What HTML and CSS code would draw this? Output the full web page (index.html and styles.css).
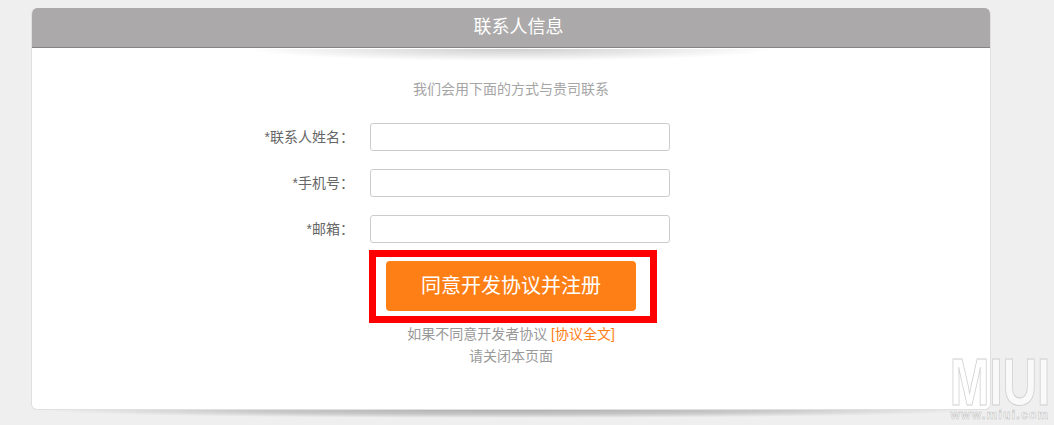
FILE: index.html
```html
<!DOCTYPE html>
<html lang="zh-CN">
<head>
  <meta charset="UTF-8">
  <title>联系人信息</title>
  <link rel="stylesheet" href="styles.css">
</head>
<body>

  <div class="panel">
    <h2 class="panel-title">联系人信息</h2>
    <div class="title-shadow"></div>
    <p class="panel-tip">我们会用下面的方式与贵司联系</p>

    <form class="contact-form">
      <div class="form-row">
        <label class="form-label">*联系人姓名：</label>
        <input class="form-input" type="text">
      </div>
      <div class="form-row">
        <label class="form-label">*手机号：</label>
        <input class="form-input" type="text">
      </div>
      <div class="form-row">
        <label class="form-label">*邮箱：</label>
        <input class="form-input" type="text">
      </div>
      <div class="submit-row">
        <div class="highlight-box">
          <button class="submit-btn" type="button">同意开发协议并注册</button>
        </div>
      </div>
    </form>

    <p class="agree-note">如果不同意开发者协议 <a href="#">[协议全文]</a><br>请关闭本页面</p>
  </div>
  <div class="panel-shadow"></div>

  <div class="watermark">
    <div class="watermark-logo">MIUI</div>
    <div class="watermark-url">www.miui.com</div>
  </div>

</body>
</html>
```

FILE: styles.css
```css
* {
  box-sizing: border-box;
  margin: 0;
  padding: 0;
  font-family: "Liberation Sans", "Noto Sans CJK SC", sans-serif;
}

html, body {
  height: 100%;
  overflow: hidden;
}

body {
  background-color: #efefef;
  padding: 8px 64px 0 31px;
  position: relative;
}

.panel {
  width: 960px;
  background-color: #fff;
  border: 1px solid #e0e0e0;
  border-top: none;
  border-radius: 6px;
  height: 402px;
  overflow: hidden;
}

.panel-title {
  height: 40px;
  margin: 0 -1px;
  padding-left: 15px;
  background-color: #aba9a9;
  border-bottom: 1px solid #858383;
  color: #fff;
  font-size: 18px;
  font-weight: normal;
  line-height: 39px;
  text-align: center;
}

.title-shadow {
  height: 12px;
  margin: 1px 215px 0 215px;
  background: radial-gradient(ellipse 50% 100% at 50% 0, #cfcfcf 0%, #e8e8e8 55%, #fff 100%);
}

.panel-tip {
  margin-top: 18px;
  color: #a5a5a5;
  font-size: 14px;
  line-height: 20px;
  text-align: center;
}

.contact-form {
  margin-top: 24px;
}

.form-row {
  display: flex;
  align-items: center;
  margin-bottom: 18px;
}

.form-label {
  width: 322px;
  padding-bottom: 2px;
  color: #666;
  font-size: 14px;
  text-align: right;
}

.form-input {
  width: 300px;
  height: 28px;
  margin-left: 16px;
  background-color: #fff;
  border: 1px solid #ccc;
  border-radius: 3px;
}

.submit-row {
  margin-top: -11px;
  padding-left: 337px;
}

.highlight-box {
  width: 288px;
  height: 73px;
  padding: 4px 14px 0 10px;
  border: 7px solid #f00;
}

.submit-btn {
  display: block;
  width: 250px;
  height: 50px;
  padding-bottom: 4px;
  background-color: #ff7f17;
  border: none;
  border-radius: 4px;
  color: #fff;
  font-size: 20px;
  cursor: pointer;
}

.agree-note {
  color: #999;
  font-size: 14px;
  line-height: 22px;
  text-align: center;
}

.agree-note a {
  color: #ff7f17;
  text-decoration: none;
}

.panel-shadow {
  width: 940px;
  height: 8px;
  margin-left: 10px;
  background: radial-gradient(ellipse 50% 100% at 50% 0, #b0b0b0 0%, #c8c8c8 55%, #efefef 100%);
}

.watermark {
  position: absolute;
  right: 2px;
  bottom: 4px;
  width: 104px;
  text-align: center;
}

.watermark-logo {
  display: flex;
  justify-content: center;
  margin-bottom: 4px;
  color: rgba(255, 255, 255, 0.6);
  font-size: 67px;
  font-weight: bold;
  line-height: 48px;
  -webkit-text-stroke: 1px #cfcfcf;
  transform: scaleX(0.71);
  white-space: nowrap;
}

.watermark-url {
  color: #fff;
  font-size: 12px;
  font-weight: bold;
  line-height: 11px;
  letter-spacing: 1.3px;
  -webkit-text-stroke: 0.5px #bbb;
  white-space: nowrap;
}
```
